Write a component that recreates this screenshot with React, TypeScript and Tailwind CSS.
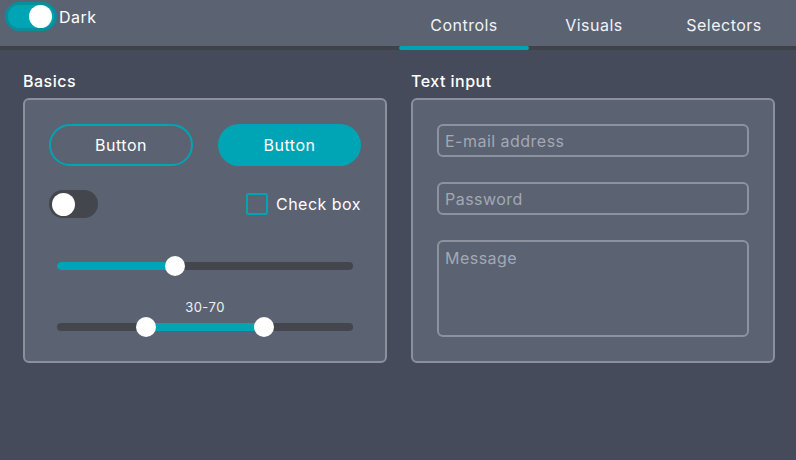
import React from "react";

function Slider({ value }: { value: number }) {
  return (
    <div className="relative h-[20px] mx-[8px]">
      <div className="absolute left-0 right-0 top-[6px] h-[8px] rounded-full bg-[#43464c]" />
      <div className="absolute left-0 top-[6px] h-[8px] rounded-full bg-[#00a5b5]" style={{ width: `${value}%` }} />
      <div className="absolute top-0 w-[20px] h-[20px] rounded-full bg-white -ml-[10px]" style={{ left: `${value}%` }} />
    </div>
  );
}

function RangeSlider({ lo, hi }: { lo: number; hi: number }) {
  return (
    <div className="relative h-[20px] mx-[8px]">
      <div className="absolute left-0 right-0 top-[6px] h-[8px] rounded-full bg-[#43464c]" />
      <div className="absolute top-[6px] h-[8px] bg-[#00a5b5]" style={{ left: `${lo}%`, width: `${hi - lo}%` }} />
      <div className="absolute top-0 w-[20px] h-[20px] rounded-full bg-white -ml-[10px]" style={{ left: `${lo}%` }} />
      <div className="absolute top-0 w-[20px] h-[20px] rounded-full bg-white -ml-[10px]" style={{ left: `${hi}%` }} />
    </div>
  );
}

export default function App() {
  return (
    <div className="w-[796px] h-[460px] bg-[#454b5a] text-white overflow-hidden tracking-[0.03em]" style={{ fontFamily: "Inter, 'Noto Sans', sans-serif" }}>
      <div className="h-[50px] bg-[#5b6272] border-b-4 border-[#3f4248] flex items-stretch justify-between">
        <div className="flex items-start pt-[2px] pl-[5px]">
          <div className="w-[52px] h-[29px] rounded-full bg-[#00a5b5] border-[3px] border-[#0a8e9c] flex items-center justify-end pr-[2px]">
            <div className="w-[23px] h-[23px] rounded-full bg-white" />
          </div>
          <span className="ml-[2px] mt-[5px] text-[16px] leading-[20px]">Dark</span>
        </div>
        <div className="flex pr-[7px] pt-[4px]">
          <div className="relative w-[130px] flex items-center justify-center text-[16px] text-[#f2f3f5]">
            Controls
            <div className="absolute left-0 right-0 -bottom-[4px] h-[4px] rounded-full bg-[#00a5b5]" />
          </div>
          <div className="w-[130px] flex items-center justify-center text-[16px] text-[#f2f3f5]">Visuals</div>
          <div className="w-[130px] flex items-center justify-center text-[16px] text-[#f2f3f5]">Selectors</div>
        </div>
      </div>

      <div className="flex gap-[24px] pl-[23px] pt-[21px]">
        <div className="w-[364px]">
          <div className="text-[16px] leading-[20px] font-medium mb-[7px]">Basics</div>
          <div className="h-[265px] rounded-[6px] border-2 border-[#8a909c] bg-[#5b6272] p-6 flex flex-col">
            <div className="flex gap-[25px]">
              <button className="w-[144px] h-[42px] rounded-full border-2 border-[#00a5b5] text-[16px]">Button</button>
              <button className="w-[143px] h-[42px] rounded-full bg-[#00a5b5] text-[16px]">Button</button>
            </div>
            <div className="flex items-center justify-between mt-[24px]">
              <div className="w-[49px] h-[28px] rounded-full bg-[#43464c] flex items-center pl-[3px]">
                <div className="w-[23px] h-[23px] rounded-full bg-white" />
              </div>
              <div className="flex items-center gap-[8px]">
                <div className="w-[22px] h-[22px] rounded-[3px] border-2 border-[#00a5b5]" />
                <span className="text-[16px]">Check box</span>
              </div>
            </div>
            <div className="mt-[38px]">
              <Slider value={40} />
            </div>
            <div className="mt-[23px] text-center text-[13px] leading-[16px] text-[#eef0f2]">30-70</div>
            <div className="mt-[2px]">
              <RangeSlider lo={30} hi={70} />
            </div>
          </div>
        </div>

        <div className="w-[364px]">
          <div className="text-[16px] leading-[20px] font-medium mb-[7px]">Text input</div>
          <div className="h-[265px] rounded-[6px] border-2 border-[#8a909c] bg-[#5b6272] p-6 flex flex-col gap-[25px]">
            <div className="h-[33px] rounded-[6px] border-2 border-[#8d939e] px-[6px] flex items-center text-[16px] text-[#a3a9b3]">E-mail address</div>
            <div className="h-[33px] rounded-[6px] border-2 border-[#8d939e] px-[6px] flex items-center text-[16px] text-[#a3a9b3]">Password</div>
            <div className="h-[97px] rounded-[6px] border-2 border-[#8d939e] px-[6px] pt-[4px] text-[16px] text-[#a3a9b3]">Message</div>
          </div>
        </div>
      </div>
    </div>
  );
}
